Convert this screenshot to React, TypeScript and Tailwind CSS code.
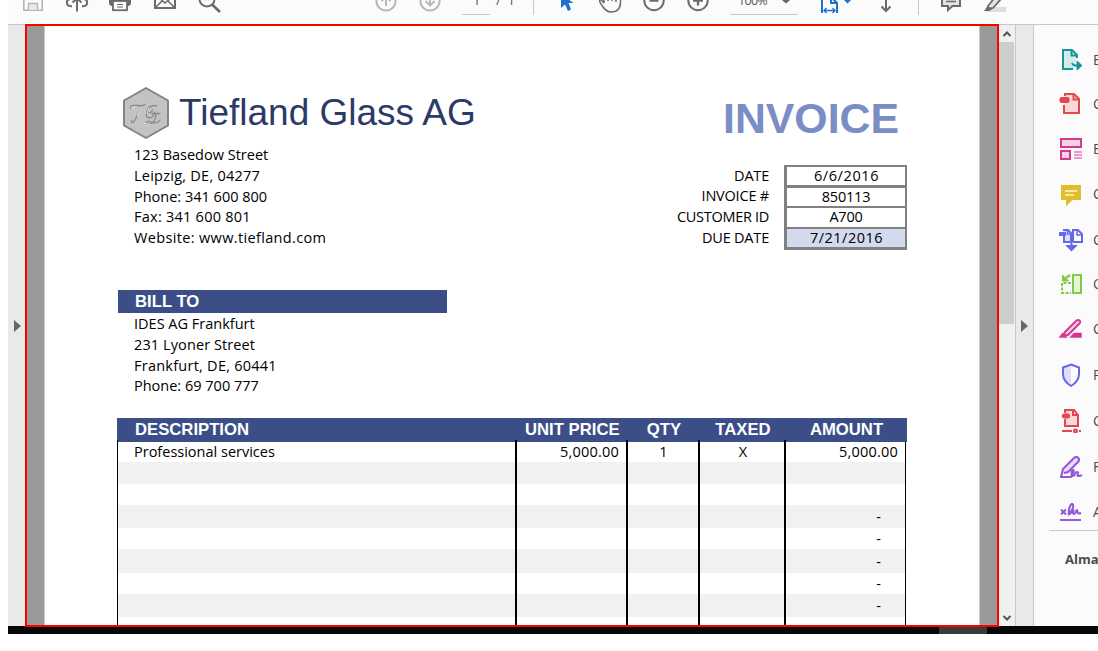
import type { ReactNode } from "react";

const sans = "font-['Open_Sans','Liberation_Sans',sans-serif]";
const arial = "font-['Liberation_Sans',sans-serif]";
const body = "font-['Open_Sans','Liberation_Sans',sans-serif] text-[14.5px] text-black whitespace-pre";

function ToolIcon({ x, w, gap, children }: { x: number; w: number; gap: string; children: ReactNode }) {
  return (
    <svg className={`${gap} shrink-0`} width={w} height={24} viewBox={`${x} 0 ${w} 24`} fill="none" stroke="#6b6b6b" strokeWidth={2}>
      {children}
    </svg>
  );
}

function Toolbar() {
  return (
    <div className={`ml-2 flex h-6 shrink-0 items-start overflow-hidden bg-[#fbfbfb] text-[#555] ${sans}`}>
      <ToolIcon x={22} w={22} gap="ml-[14px]">
        <path d="M23.8 -4V10.2H42.2V-4" stroke="#b5b5b5" strokeWidth={1.6} />
        <path d="M28.5 10V3.5H37.5V10" stroke="#b5b5b5" fill="#e9e9e9" strokeWidth={1.3} />
      </ToolIcon>
      <ToolIcon x={65} w={24} gap="ml-[21px]">
        <path d="M77 11.5V-3M72.5 2.5L77 -1.5L81.5 2.5" />
        <path d="M72 6.2H71C65.500 6 65.500 -1 71 -1M82 6.200H83C88.500 6 88.500 -1 83 -1" />
      </ToolIcon>
      <ToolIcon x={108} w={24} gap="ml-[19px]">
        <path d="M109 -2H131V4L129 6H111L109 4Z" fill="#6b6b6b" stroke="none" />
        <rect x={113} y={1} width={14} height={9.200} fill="#fbfbfb" strokeWidth={1.800} />
        <path d="M117 4.500H123M117 7H123" strokeWidth={1.200} />
      </ToolIcon>
      <ToolIcon x={153} w={24} gap="ml-[21px]">
        <path d="M155 -4V8H175V-4" />
        <path d="M155 8L162 1M175 8L168 1M158 -3L165 3L172 -3" strokeWidth={1.500} />
      </ToolIcon>
      <ToolIcon x={197} w={26} gap="ml-[20px]">
        <circle cx={207} cy={-1} r={7.500} />
        <path d="M212 4.500L220 12" strokeWidth={2.700} />
        <path d="M204 0H210" stroke="#bbb" strokeWidth={1} strokeDasharray="1 1" />
      </ToolIcon>
      <ToolIcon x={375} w={23} gap="ml-[152px]">
        <circle cx={386} cy={1} r={9.600} stroke="#b8b8b8" />
        <path d="M386 6V-4M381.500 1L386 -3L390.500 1" stroke="#b8b8b8" />
      </ToolIcon>
      <ToolIcon x={419} w={23} gap="ml-[21px]">
        <circle cx={430} cy={1} r={9.600} stroke="#b8b8b8" />
        <path d="M430 -4V5.500M425.500 1L430 5.500L434.500 1" stroke="#b8b8b8" />
      </ToolIcon>
      <div className="ml-5 h-[15px] w-7 border-b border-[#c8c8c8]">
        <div className="-mt-[9px] pl-[11px] text-[13px] leading-[18px]">1</div>
      </div>
      <div className="-mt-[9px] ml-[6px] w-[20px] text-[13px] leading-[18px] whitespace-pre">/  1</div>
      <div className="ml-[17px] h-[15px] w-px bg-[#c8c8c8]" />
      <ToolIcon x={560} w={15} gap="ml-[26px]">
        <path d="M561 -6V8L565 4.500L568 11L571 9.500L568.500 3H573.500Z" fill="#1f72cc" stroke="none" />
      </ToolIcon>
      <ToolIcon x={598} w={25} gap="ml-[23px]">
        <path d="M604 3L601 -.5C598.500 0 600 3 602 5.500C604.500 9.500 607 12 611 12C617.500 12 620.500 8 620.500 2V-3M604 3V-3M608 1V-3M612 1V-3M616 2V-3" strokeWidth={1.500} />
      </ToolIcon>
      <ToolIcon x={642} w={24} gap="ml-[19px]">
        <circle cx={654} cy={.5} r={9.700} />
        <path d="M649.500 .5H658.500" strokeWidth={2.500} />
      </ToolIcon>
      <ToolIcon x={686} w={24} gap="ml-[20px]">
        <circle cx={698} cy={.5} r={9.700} />
        <path d="M693 .5H703M698 -4V5.500" strokeWidth={2.300} />
      </ToolIcon>
      <div className="ml-[20px] flex h-[15px] w-[68px] border-b border-[#c8c8c8]">
        <div className="-mt-[8px] ml-[8px] w-[44px] text-[12.5px] leading-[18px] tracking-[-0.7px]">100%</div>
        <svg width={8} height={5} viewBox="0 0 8 5"><path d="M0 0H8L4 3.500Z" fill="#666" /></svg>
      </div>
      <ToolIcon x={820} w={32} gap="ml-[22px]">
        <path d="M822 13V-3H831L837 3V13M831 -3V3H837" stroke="#1f72cc" />
        <path d="M824 10.500H835M826.500 8L824 10.500L826.500 13M832.500 8L835 10.500L832.500 13" stroke="#1f72cc" strokeWidth={1.400} />
        <path d="M844 0H851L847.500 3.500Z" fill="#1f72cc" stroke="none" />
      </ToolIcon>
      <ToolIcon x={879} w={14} gap="ml-[27px]">
        <path d="M886 0V11M881.500 6.500L886 11L890.500 6.500" />
      </ToolIcon>
      <div className="ml-[25px] h-[15px] w-px bg-[#c8c8c8]" />
      <ToolIcon x={940} w={22} gap="ml-[21px]">
        <path d="M942 -4V6H948V10L952.500 6H960V-4" fill="#e4e4e4" />
        <path d="M946 1.500H956" strokeWidth={1.500} />
      </ToolIcon>
      <ToolIcon x={983} w={24} gap="ml-[21px]">
        <path d="M990 7H1006V12H986Z" fill="#dedede" stroke="none" />
        <path d="M988 6L996 -4L1001 -1L993 8L988.500 8.500Z" fill="#e4e4e4" strokeWidth={1.800} />
        <path d="M984 11L987.500 6L992 9.500L989 11Z" fill="#6b6b6b" stroke="none" />
      </ToolIcon>
    </div>
  );
}

function Logo() {
  return (
    <svg className="h-[54px] w-[48px] shrink-0" viewBox="0 0 48 54">
      <path d="M24 2L46 14.500V39.500L24 52L2 39.500V14.500Z" fill="#c3c3c3" stroke="#828282" strokeWidth={1.900} />
      <g fill="none" stroke="#8b8b8b" strokeWidth={1.300} strokeLinecap="round">
        <path d="M9 23C7 18.500 13 19.500 16 19.500S21 20 23 18.500M18 20C17 26 15 31 12 35.500C10.500 38 8 36 10 34.500" />
        <path d="M35 20C30 18 24.500 23 26 26C27.500 28 30 26 30.500 24M27 20.500C23.500 26 23.500 32 27 32C30 32 32 29 33 26M30 27.500H38M34 28C34 34 31 38.500 26 38C21.500 37 25 34.500 29 36C34 38 37 36 38 34" />
      </g>
      <path d="M9 23L13 21M22 37L29 39M18 21L15.500 31M27 21L25 28" stroke="#e8e8e8" strokeWidth={0.900} />
    </svg>
  );
}

function Summary() {
  const label = "flex h-[20.75px] items-center justify-end";
  const value = "flex items-center justify-center border-[#808080]";
  return (
    <div className={`flex ${body}`}>
      <div className="w-[107px]">
        <div className={`${label} tracking-[-0.2px]`}>DATE</div>
        <div className={`${label} tracking-[-0.2px]`}>INVOICE #</div>
        <div className={`${label} tracking-[-0.3px]`}>CUSTOMER ID</div>
        <div className={`${label} tracking-[-0.2px]`}>DUE DATE</div>
      </div>
      <div className="ml-[15px] w-[123px] border-t-2 border-r-2 border-b-[3px] border-l-[3px] border-[#808080]">
        <div className={`${value} h-[21px] border-b-[3px] pl-px leading-[16px] tracking-[0.6px]`}>6/6/2016</div>
        <div className={`${value} h-[20px] border-b-2 leading-[16px] tracking-[-0.2px]`}>850113</div>
        <div className={`${value} h-[21px] border-b-2 pb-px leading-[16px] tracking-[-0.2px]`}>A700</div>
        <div className={`${value} h-[18px] bg-[#d3daee] pl-px leading-[16px] tracking-[0.5px]`}>7/21/2016</div>
      </div>
    </div>
  );
}

function Row({ shade, height, cells }: { shade?: boolean; height: string; cells?: string[] }) {
  const [d = "", u = "", q = "", t = "", a = ""] = cells ?? [];
  const dash = a === "-";
  return (
    <div className={`flex w-[789px] border-x border-black leading-[18px] ${height} ${shade ? "bg-[#f1f1f1]" : "bg-white"}`}>
      <div className="flex w-[399px] items-center border-r-2 border-black pl-4">{d}</div>
      <div className="flex w-[111px] items-center justify-end border-r-2 border-black pr-[7px] tracking-[0.2px]">{u}</div>
      <div className="flex w-[72px] items-center justify-center border-r-2 border-black pl-px">{q}</div>
      <div className="flex w-[86px] items-center justify-center border-r-2 border-black pl-[2px]">{t}</div>
      <div className={`flex flex-1 items-center justify-end tracking-[0.2px] ${dash ? "pt-px pr-6" : "pr-[7px]"}`}>{a}</div>
    </div>
  );
}

function InvoiceTable() {
  return (
    <div className="ml-[72px] w-[790px]">
      <div className={`flex h-[22px] items-center bg-[#3b4e87] pl-[18px] text-[16.7px] leading-[22px] font-bold text-white ${arial}`}>
        <div className="w-[382px] pt-[2px]">DESCRIPTION</div>
        <div className="w-[111px] pt-[2px] pl-[8px] whitespace-nowrap">UNIT PRICE</div>
        <div className="w-[72px] pt-[2px] text-center">QTY</div>
        <div className="w-[86px] pt-[2px] text-center">TAXED</div>
        <div className="w-[121px] pt-[2px] text-center">AMOUNT</div>
      </div>
      <div className="flex h-[2px] w-[790px] border-l border-black bg-[#3b4e87]">
        <div className="w-[399px] border-r-2 border-black" />
        <div className="w-[111px] border-r-2 border-black" />
        <div className="w-[72px] border-r-2 border-black" />
        <div className="w-[86px] border-r-2 border-black" />
      </div>
      <div className={body}>
        <Row height="h-[20px]" cells={["Professional services", "5,000.00", "1", "X", "5,000.00"]} />
        <Row shade height="h-[22px]" />
        <Row height="h-[21px]" />
        <Row shade height="h-[23px]" cells={["", "", "", "", "-"]} />
        <Row height="h-[21px]" cells={["", "", "", "", "-"]} />
        <Row shade height="h-[24px]" cells={["", "", "", "", "-"]} />
        <Row height="h-[21px]" cells={["", "", "", "", "-"]} />
        <Row shade height="h-[23px]" cells={["", "", "", "", "-"]} />
        <Row height="h-[21px]" />
      </div>
    </div>
  );
}

function InvoicePage() {
  return (
    <div className="w-[936px] shrink-0 overflow-hidden border-x border-[#c8c8c8] bg-white">
      <div className="flex h-[118px] justify-between pt-[60px] pr-[80px] pl-[77px]">
        <div className="flex">
          <Logo />
          <div className={`ml-[9px] pt-[6px] text-[37px] leading-[42px] whitespace-nowrap text-[#2b3a67] ${arial}`}>Tiefland Glass AG</div>
        </div>
        <div className={`pt-[7px] text-[42.8px] leading-[50px] font-bold text-[#7a8dc5] ${arial}`}>INVOICE</div>
      </div>
      <div className="flex h-[146px] justify-between pr-[72px] pl-[89px]">
        <div className={`${body} pt-px leading-[20.75px]`}>
          <div>123 Basedow Street</div>
          <div className="tracking-[0.25px]">Leipzig, DE, 04277</div>
          <div>Phone: 341 600 800</div>
          <div className="tracking-[0.25px]">Fax: 341 600 801</div>
          <div className="tracking-[0.35px]">Website: www.tiefland.com</div>
        </div>
        <div className="pt-[21px]"><Summary /></div>
      </div>
      <div className={`ml-[73px] h-[23px] w-[329px] bg-[#3b4e87] pl-[17px] text-[16.7px] leading-[23px] font-bold text-white ${arial}`}>BILL TO</div>
      <div className={`h-[105px] pt-px pl-[89px] ${body} leading-[20.75px]`}>
        <div>IDES AG Frankfurt</div>
        <div className="tracking-[0.1px]">231 Lyoner Street</div>
        <div className="tracking-[0.25px]">Frankfurt, DE, 60441</div>
        <div>Phone: 69 700 777</div>
      </div>
      <InvoiceTable />
    </div>
  );
}

const tools: { letter: string; height: string; color: string; art: ReactNode }[] = [
  { letter: "E", height: "h-[44px]", color: "#16969b", art: <><path d="M18 10V7L13 2H4V21H14" fill="#d5ebe8" /><path d="M12.500 2V7.500H18" /><path d="M13 15C14 18 16 17.500 20 17.500" /><path d="M18 13L23 17.500L18 22Z" fill="#16969b" strokeWidth={1} /></> },
  { letter: "C", height: "h-[45px]", color: "#e34850", art: <><path d="M5 13V21H20V7L15 2H6V5Z" fill="#f8d7d9" stroke="none" /><path d="M5 13V21H20V7L15 2H6V4" /><path d="M14.500 2V7.500H20" /><rect x={1.500} y={6} width={8} height={4} rx={1} fill="#e34850" /></> },
  { letter: "E", height: "h-[45px]", color: "#d83790", art: <><path d="M2 2H22V10H2ZM2 14H11V22H2Z" fill="#f5d2e6" /><path d="M15 15H23M15 18H23M15 21H23" strokeWidth={1.200} /></> },
  { letter: "C", height: "h-[46px]", color: "#dfbf2b", art: <><path d="M3 4H21V17H13L8 22V17H3Z" fill="#dfbf2b" /><path d="M6 9H18M6 13H15" stroke="#fff8dc" strokeWidth={1.500} /></> },
  { letter: "C", height: "h-[44px]", color: "#6767ec", art: <><path d="M5 8V14H12V5L9 2H4" fill="#dedefa" /><path d="M14 14H23V6L19 2H14V14" /><path d="M8.500 2V6H12M18 2V7H23" strokeWidth={1.500} /><path d="M1 5H6V7H1ZM8.500 18H16.500L12.500 22ZM12.500 14V19" fill="#6767ec" /></> },
  { letter: "O", height: "h-[45px]", color: "#82c944", art: <><path d="M14 3H22V21H14Z" fill="#e5f3d8" /><path d="M12 11H3V21H12" strokeDasharray="3 1.500" /><path d="M11 3L7 6" strokeWidth={2.500} /><path d="M3.500 3V9H9.500Z" fill="#82c944" strokeWidth={1} /></> },
  { letter: "C", height: "h-[46px]", color: "#d83790", art: <><path d="M6 15L17 4C20 1.500 23 4.500 20 7L9 18L5 18.500Z" fill="#f5d2e6" /><path d="M1 20L4 16.500L7 20ZM12 20L15 16.500H22V20Z" fill="#d83790" strokeWidth={1.500} /></> },
  { letter: "P", height: "h-[46px]", color: "#6767ec", art: <><path d="M12 1.500L4 5V11C4 17 7 20 12 23Z" fill="#dedefa" stroke="none" /><path d="M12 1.500L20 4.500V11C20 17 17 20 12 23C7 20 4 17 4 11V4.500Z" /></> },
  { letter: "C", height: "h-[46px]", color: "#e34850", art: <><path d="M6 10V17H19V6L15 1H6V4" fill="#f8d7d9" /><path d="M14 1V6H19" /><rect x={4} y={5.500} width={6} height={3} rx={1} fill="#e34850" /><path d="M3 22H13M20 22H22" /><circle cx={16.500} cy={22} r={1.500} fill="#f8d7d9" /></> },
  { letter: "F", height: "h-[45px]", color: "#9256d9", art: <><path d="M2 22L4 14L15 3C18 0 22 4 19 7L9 17L5 18" fill="#e9dcf7" /><path d="M1 22H12C14 20 11 15 14 15S11 21 14 21C17 21 15 17 18 17S17 21 19 21S22 21 23 20" strokeWidth={2} /></> },
  { letter: "A", height: "h-[45px]", color: "#9256d9", art: <><path d="M2 9.500L7 14.500M7 9.500L2 14.500M9 15C14 11 15 5 13.500 4S9 9 10 14C11 15 14 9.500 14.500 10S13 14 15 14S17 10 18 10S17 15 22 13" strokeWidth={2} /><path d="M1 20H22" strokeWidth={1.900} /></> },
];

function ToolPanel() {
  return (
    <div className={`w-[64px] shrink-0 overflow-hidden bg-[#fbfbfb] pt-[23px] ${sans}`}>
      {tools.map((t, i) => (
        <div key={i} className={`flex pl-[25px] ${t.height}`}>
          <svg className="size-6 shrink-0" viewBox="0 0 24 24" fill="none" stroke={t.color} strokeWidth={2}>{t.art}</svg>
          <span className="ml-[10px] text-[14px] leading-6 text-[#4b4b4b]">{t.letter}</span>
        </div>
      ))}
      <div className="-mt-[15px] ml-[15px] h-px bg-[#c8c8c8]" />
      <div className="mt-[17px] ml-[31px] text-[13px] leading-[22px] font-bold text-[#4b4b4b]">Alma</div>
    </div>
  );
}

export default function App() {
  return (
    <div className="h-[651px] w-[1098px] overflow-hidden bg-white">
      <Toolbar />
      <div className="ml-2 flex h-[602px]">
        <div className="flex w-[17px] shrink-0 items-center border-t border-[#c8c8c8] bg-[#e9e9e9] pl-[6px]">
          <svg width={7} height={12} viewBox="0 0 7 12"><path d="M0 0L7 6L0 12Z" fill="#666" /></svg>
        </div>
        <div className="relative z-10 flex h-[603px] w-[974px] shrink-0 justify-center overflow-hidden border-2 border-[#ff0000] bg-[#999]">
          <InvoicePage />
        </div>
        <div className="flex w-[17px] shrink-0 flex-col justify-between border-t border-r border-[#c8c8c8] bg-[#f0f0f0]">
          <div>
            <svg className="block" width={16} height={17} viewBox="0 0 16 17" fill="none" stroke="#555" strokeWidth={2}><path d="M4.500 11L8 7.500L11.500 11" /></svg>
            <div className="h-[282px] w-[15px] bg-[#cdcdcd]" />
          </div>
          <svg width={16} height={17} viewBox="0 0 16 17" fill="none" stroke="#555" strokeWidth={2}><path d="M4.500 7L8 10.500L11.500 7" /></svg>
        </div>
        <div className="flex w-[18px] shrink-0 items-center border-t border-r border-[#c8c8c8] bg-[#e9e9e9] pl-[5px]">
          <svg width={7} height={12} viewBox="0 0 7 12"><path d="M0 0L7 6L0 12Z" fill="#666" /></svg>
        </div>
        <div className="flex border-t border-[#c8c8c8]"><ToolPanel /></div>
      </div>
      <div className="ml-2 flex h-2 bg-[#070707] pl-[931px]"><div className="h-full w-12 bg-[#3a3a3a]" /></div>
    </div>
  );
}
